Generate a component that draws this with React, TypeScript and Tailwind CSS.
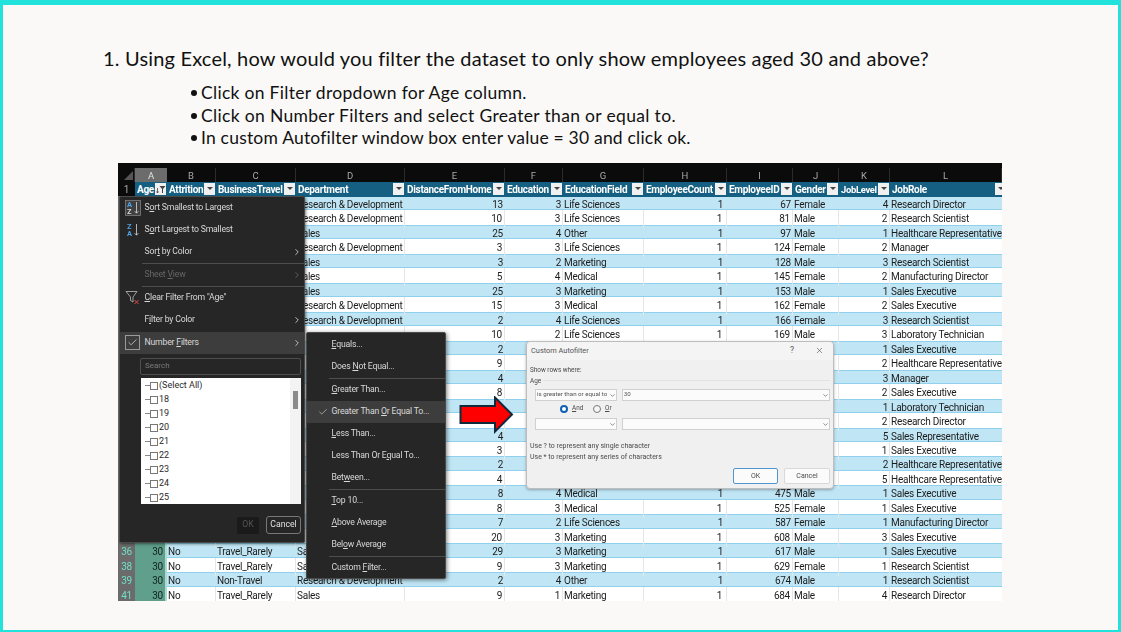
import React from "react";
import { Check, ChevronRight, ChevronDown, X } from "lucide-react";

const GRID = "grid grid-cols-[17px_32px_49px_80px_109px_100px_58px_81px_83px_66px_46px_51px_112px]";
const RD = "Research & Development";
const LS = "Life Sciences";
const SE = "Sales Executive";
const RS = "Research Scientist";
const HR = "Healthcare Representative";

type R = [string, string, string, string, string, string, string, string, string, string, string, string];
const rows: R[] = [
  ["2", "", RD, "13", "3", LS, "1", "67", "Female", "4", "Research Director", ""],
  ["3", "", RD, "10", "3", LS, "1", "81", "Male", "2", RS, ""],
  ["4", "", "Sales", "25", "4", "Other", "1", "97", "Male", "1", HR, ""],
  ["5", "", RD, "3", "3", LS, "1", "124", "Female", "2", "Manager", ""],
  ["6", "", "Sales", "3", "2", "Marketing", "1", "128", "Male", "3", RS, ""],
  ["7", "", "Sales", "5", "4", "Medical", "1", "145", "Female", "2", "Manufacturing Director", ""],
  ["8", "", "Sales", "25", "3", "Marketing", "1", "153", "Male", "1", SE, ""],
  ["9", "", RD, "15", "3", "Medical", "1", "162", "Female", "2", SE, ""],
  ["10", "", RD, "2", "4", LS, "1", "166", "Female", "3", RS, ""],
  ["11", "", "", "10", "2", LS, "1", "169", "Male", "3", "Laboratory Technician", ""],
  ["12", "", "", "2", "", "", "", "", "", "1", SE, ""],
  ["13", "", "", "9", "", "", "", "", "", "2", HR, ""],
  ["14", "", "", "4", "", "", "", "", "", "3", "Manager", ""],
  ["15", "", "", "8", "", "", "", "", "", "2", SE, ""],
  ["16", "", "", "", "", "", "", "", "", "1", "Laboratory Technician", ""],
  ["17", "", "", "", "", "", "", "", "", "2", "Research Director", ""],
  ["18", "", "", "4", "", "", "", "", "", "5", "Sales Representative", ""],
  ["19", "", "", "3", "", "", "", "", "", "1", SE, ""],
  ["20", "", "", "2", "", "", "", "", "", "2", HR, ""],
  ["21", "", "", "4", "", "", "", "", "", "5", HR, ""],
  ["22", "", "", "8", "4", "Medical", "1", "475", "Male", "1", SE, ""],
  ["23", "", "", "8", "3", "Medical", "1", "525", "Female", "1", SE, ""],
  ["24", "", "", "7", "2", LS, "1", "587", "Female", "1", "Manufacturing Director", ""],
  ["25", "", "", "20", "3", "Marketing", "1", "608", "Male", "3", SE, ""],
  ["36", "Travel_Rarely", "Sales", "29", "3", "Marketing", "1", "617", "Male", "1", SE, ""],
  ["38", "Travel_Rarely", "Sales", "9", "3", "Marketing", "1", "629", "Female", "1", RS, ""],
  ["39", "Non-Travel", RD, "2", "4", "Other", "1", "674", "Male", "1", RS, ""],
  ["41", "Travel_Rarely", "Sales", "9", "1", "Marketing", "1", "684", "Male", "4", "Research Director", ""],
];

function Num({ v, band }: { v: string; band: boolean }) {
  return <div className={`text-right pr-[2px] ${band ? "" : "border-r border-[#e6e6e6]"}`}>{v}</div>;
}
function Txt({ v, band }: { v: string; band: boolean }) {
  return <div className={`pl-[1px] whitespace-nowrap ${band ? "" : "border-r border-[#e6e6e6]"}`}>{v}</div>;
}

function DataRow({ r, i }: { r: R; i: number }) {
  const band = i % 2 === 0;
  const age = i >= 24 ? "30" : "";
  return (
    <div className={`${GRID} h-[14.48px] leading-[18px] text-[10px] tracking-[-0.25px] text-[#1c1c1c] ${band ? "bg-[#c0e6f5] shadow-[inset_0_1px_0_#8fd0ec,inset_0_-1px_0_#8fd0ec]" : "bg-white"}`}>
      <div className="bg-[#6b6b6b] text-[#6fe0c8] text-center shadow-[inset_0_-1px_0_#555]">{r[0]}</div>
      <div className="bg-[#5f9f8c] text-right pr-[2px] border-r-2 border-[#a9dccd] text-[#10241e]">{age}</div>
      <Txt v={age ? "No" : ""} band={band} />
      <Txt v={r[1]} band={band} />
      <Txt v={r[2]} band={band} />
      <Num v={r[3]} band={band} />
      <Num v={r[4]} band={band} />
      <Txt v={r[5]} band={band} />
      <div className={`text-right pr-[4px] ${band ? "" : "border-r border-[#e6e6e6]"}`}>{r[6]}</div>
      <Num v={r[7]} band={band} />
      <Txt v={r[8]} band={band} />
      <Num v={r[9]} band={band} />
      <div className="pl-[1px] whitespace-nowrap overflow-hidden">{r[10]}</div>
    </div>
  );
}

function FilterBtn({ filtered, edge }: { filtered?: boolean; edge?: boolean }) {
  return (
    <span className={`absolute top-[1px] w-[11px] h-[12px] bg-[#f0f0f0] flex items-center justify-center ${edge ? "right-[-4px]" : "right-[1px]"}`}>
      {filtered ? (
        <svg width="10" height="10" viewBox="0 0 10 10">
          <path d="M3.5 2h6L7 5v4H6V5z" fill="#444" />
          <path d="M1.5 4v5M0.5 7.5l1 1.5 1-1.5" stroke="#444" strokeWidth="0.8" fill="none" />
        </svg>
      ) : (
        <span className="w-0 h-0 border-x-[3px] border-x-transparent border-t-[3.5px] border-t-[#444]" />
      )}
    </span>
  );
}

function Head({ label }: { label: string }) {
  return (
    <div className={`relative pl-[2px] whitespace-nowrap overflow-hidden ${label === "JobLevel" ? "text-[9.4px]" : ""}`}>
      {label}
      <FilterBtn edge={label === "JobRole"} />
    </div>
  );
}

function Mn({ t }: { t: string }) {
  const parts = t.split("~");
  return (
    <>
      {parts[0]}
      {parts[1] !== undefined && <u>{parts[1][0]}</u>}
      {parts[1] !== undefined && parts[1].slice(1)}
    </>
  );
}

function MenuItem({ t, h = "h-[22px]", active, arrow, dim, icon }: { t: string; h?: string; active?: boolean; arrow?: boolean; dim?: boolean; icon?: React.ReactNode }) {
  return (
    <div className={`relative flex items-center pl-[24.5px] ${h} ${active ? "bg-[#3d3d3d]" : ""} ${dim ? "text-[#666]" : "text-[#d8d8d8]"}`}>
      {icon && <span className="absolute left-[5px] top-0 h-full flex items-center">{icon}</span>}
      <span className="whitespace-nowrap"><Mn t={t} /></span>
      {arrow && <ChevronRight className={`absolute right-[2px] w-[10px] h-[10px] ${dim ? "text-[#666]" : "text-[#d8d8d8]"}`} />}
    </div>
  );
}

function Sep() {
  return <div className="h-px ml-[22px] bg-[#4d4d4d]" />;
}

function SortIcon({ top, bottom, boxed }: { top: string; bottom: string; boxed?: boolean }) {
  return (
    <svg width="16" height="16" viewBox="0 0 16 16">
      {boxed && <rect x="0.5" y="0.5" width="15" height="15" fill="#3f3f3f" stroke="#8a8a8a" strokeWidth="0.7" />}
      <text x="2" y="7" fontSize="7.5" fontWeight="700" fontFamily="Roboto, sans-serif" fill="#4ea4e8">{top}</text>
      <text x="2" y="14" fontSize="7.5" fontWeight="700" fontFamily="Roboto, sans-serif" fill={boxed ? "#d8d8d8" : "#4ea4e8"}>{bottom}</text>
      <path d="M11.5 2v11M9.7 11.2l1.8 2 1.8-2" stroke="#d8d8d8" strokeWidth="0.8" fill="none" />
    </svg>
  );
}

function FilterMenu() {
  const list = ["(Select All)", "18", "19", "20", "21", "22", "23", "24", "25"];
  return (
    <div className="absolute left-[1px] top-[33px] w-[186px] h-[347px] bg-[#262626] border border-[#4a4a4a] rounded-[2px] shadow-[1px_1px_3px_rgba(0,0,0,0.5)] text-[8.7px] tracking-[-0.2px]">
      <MenuItem t="S~ort Smallest to Largest" icon={<SortIcon top="A" bottom="Z" boxed />} />
      <MenuItem t="S~ort Largest to Smallest" icon={<SortIcon top="Z" bottom="A" />} />
      <MenuItem t="Sor~t by Color" arrow />
      <Sep />
      <MenuItem t="Sheet ~View" dim arrow />
      <Sep />
      <MenuItem
        t={'~Clear Filter From "Age"'}
        icon={
          <svg width="15" height="15" viewBox="0 0 15 15">
            <path d="M1 1.5h11L8 7v5L5.5 10.5V7z" fill="none" stroke="#bdbdbd" strokeWidth="0.8" />
            <path d="M9.5 10l4 4M13.5 10l-4 4" stroke="#e0494b" strokeWidth="1" />
          </svg>
        }
      />
      <MenuItem t="F~ilter by Color" h="h-[23px]" arrow />
      <MenuItem
        t="Number ~Filters"
        active
        arrow
        icon={
          <span className="w-[15px] h-[15px] border border-[#9a9a9a] flex items-center justify-center">
            <Check className="w-[11px] h-[11px] text-[#e0e0e0]" strokeWidth={1.5} />
          </span>
        }
      />
      <div className="mt-[4px] ml-[20px] mr-[3px] h-[17px] border border-[#4f4f4f] rounded-[2px] flex items-center pl-[4px] text-[#7a7a7a] text-[8px] tracking-normal">Search</div>
      <div className="relative mt-[3px] ml-[21px] mr-[3px] h-[126px] bg-white overflow-hidden text-[#2a2a2a] text-[9px] tracking-normal pt-[1px]">
        {list.map((l) => (
          <div key={l} className="flex items-center h-[14px] pl-[4px]">
            <span className="w-[5px] h-px bg-[#888]" />
            <span className="w-[8px] h-[8px] border border-[#777] mr-[1px]" />
            <span className="whitespace-nowrap">{l}</span>
          </div>
        ))}
        <div className="absolute right-0 top-0 w-[11px] h-full bg-[#f3f3f3]">
          <div className="mt-[13px] mx-auto w-[5px] h-[18px] bg-[#8b8b8b]" />
        </div>
      </div>
      <div className="mt-[12px] flex justify-end gap-[7px] mr-[3px] tracking-normal">
        <div className="w-[22px] h-[17px] mt-[1px] bg-[#1a1a1a] rounded-[2px] flex items-center justify-center text-[#555]">OK</div>
        <div className="w-[35px] h-[18px] border border-[#777] rounded-[3px] flex items-center justify-center text-[#e0e0e0]">Cancel</div>
      </div>
    </div>
  );
}

function SubMenu() {
  return (
    <div className="absolute left-[188px] top-[169px] w-[140px] h-[247px] bg-[#262626] border border-[#4a4a4a] rounded-[2px] shadow-[1px_1px_4px_rgba(0,0,0,0.5)] text-[8.7px] tracking-[-0.2px] pt-[1px]">
      <MenuItem t="~Equals..." />
      <MenuItem t="Does ~Not Equal..." />
      <Sep />
      <MenuItem t="~Greater Than..." />
      <MenuItem
        t="Greater Than ~Or Equal To..."
        active
        icon={<Check className="w-[10px] h-[10px] text-[#d8d8d8] ml-[6px]" strokeWidth={1.5} />}
      />
      <MenuItem t="~Less Than..." />
      <MenuItem t="Less Than Or E~qual To..." />
      <MenuItem t="Bet~ween..." />
      <Sep />
      <MenuItem t="~Top 10..." />
      <MenuItem t="~Above Average" />
      <MenuItem t="Bel~ow Average" />
      <Sep />
      <MenuItem t="Custom ~Filter..." />
    </div>
  );
}

function Field({ w, value }: { w: string; value?: string }) {
  return (
    <div className={`relative ${w} h-[12px] bg-[#fbfbfb] border border-[#d0d0d0] flex items-center pl-[1px] text-[#555] text-[6.2px] whitespace-nowrap overflow-hidden`}>
      {value}
      <ChevronDown className="absolute right-0 top-[2px] w-[7px] h-[7px] bg-[#fbfbfb] text-[#444]" strokeWidth={2} />
    </div>
  );
}

function Dialog() {
  return (
    <div className="absolute left-[408px] top-[178px] w-[308px] h-[148px] bg-[#f0f0f0] border border-[#bdbdbd] rounded-[4px] shadow-[0_1px_3px_rgba(0,0,0,0.3)] text-[6.4px] text-[#4a4a4a]">
      <div className="h-[18px] bg-[#f4f4f4] rounded-t-[4px] flex items-center pl-[4px] pr-[9px] text-[7.4px] text-[#555]">
        <span className="flex-1">Custom Autofilter</span>
        <span className="mr-[21px] text-[8.5px]">?</span>
        <X className="w-[9px] h-[9px] text-[#333]" strokeWidth={1.4} />
      </div>
      <div className="pl-[3px] pr-[3px]">
        <div className="mt-[5px] leading-[10px]">Show rows where:</div>
        <div className="mt-[1px] flex items-center leading-[10px]">
          <span>Age</span>
          <span className="flex-1 h-px bg-[#e2e2e2] ml-[2px]" />
        </div>
        <div className="ml-[5px] mt-[3px] flex gap-[5px]">
          <Field w="w-[82px]" value="is greater than or equal to" />
          <Field w="w-[209px]" value="30" />
        </div>
        <div className="ml-[30px] mt-[1px] h-[15px] flex items-center">
          <span className="w-[8px] h-[8px] rounded-full border-[2.5px] border-[#0f5fb5] bg-white" />
          <span className="ml-[4px] w-[21px]"><Mn t="~And" /></span>
          <span className="w-[8px] h-[8px] rounded-full border border-[#777] bg-[#f6f6f6]" />
          <span className="ml-[4px]"><Mn t="~Or" /></span>
        </div>
        <div className="ml-[5px] mt-[1px] flex gap-[5px]">
          <Field w="w-[82px]" />
          <Field w="w-[209px]" />
        </div>
        <div className="mt-[11px] leading-[10px] text-[7px]">Use ? to represent any single character</div>
        <div className="mt-[1.5px] leading-[10px] text-[7px]">Use * to represent any series of characters</div>
        <div className="mt-[6px] flex justify-end gap-[6px] text-[7px]">
          <div className="w-[45px] h-[16px] bg-[#fbfbfb] border border-[#4f96cf] rounded-[2px] flex items-center justify-center">OK</div>
          <div className="w-[46px] h-[16px] bg-[#fbfbfb] border border-[#d8d8d8] rounded-[2px] flex items-center justify-center">Cancel</div>
        </div>
      </div>
    </div>
  );
}

function RedArrow() {
  return (
    <svg className="absolute left-[341px] top-[233px]" width="55" height="38" viewBox="0 0 55 38">
      <path d="M1.5 10H36V1.5L53 18.5 36 35.5V27H1.5z" fill="#fe0000" stroke="#0f2a3c" strokeWidth="2" strokeLinejoin="miter" />
    </svg>
  );
}

export default function App() {
  const letters = ["", "A", "B", "C", "D", "E", "F", "G", "H", "I", "J", "K", "L"];
  const heads = ["Attrition", "BusinessTravel", "Department", "DistanceFromHome", "Education", "EducationField", "EmployeeCount", "EmployeeID", "Gender", "JobLevel", "JobRole"];
  return (
    <div className="w-[1121px] h-[632px] bg-[#22e3dc] pt-[5px] pl-[3px] pr-[3px] pb-[2px] overflow-hidden">
      <div className="h-full bg-[#faf9f7] pt-[41px] text-[#111] font-['Lato',sans-serif]">
        <div className="pl-[100px] text-[20px] leading-[24px] tracking-[0.18px]">1. Using Excel, how would you filter the dataset to only show employees aged 30 and above?</div>
        <ul className="mt-[12px] ml-[188px] text-[17.5px] leading-[22.5px]">
          {[
            { t: "Click on Filter dropdown for Age column.", c: "tracking-[0.3px]" },
            { t: "Click on Number Filters and select Greater than or equal to.", c: "tracking-[0.33px]" },
            { t: "In custom Autofilter window box enter value = 30 and click ok.", c: "tracking-[0.2px]" },
          ].map(({ t, c }) => (
            <li key={t} className={`flex items-center ${c}`}>
              <span className="w-[6px] h-[6px] rounded-full bg-[#111] mr-[4px]" />
              {t}
            </li>
          ))}
        </ul>
        <div className="relative mt-[13px] ml-[115px] w-[884px] h-[438px] overflow-hidden font-['Roboto',sans-serif] blur-[0.35px]">
          <div className={`${GRID} h-[19px] bg-[#0b0b0b] pt-[5px] text-[9.5px] text-[#a8a8a8]`}>
            {letters.map((l, i) => (
              <div key={l + i} className={`relative h-[14px] leading-[15px] text-center ${i === 1 ? "bg-[#6c6c6c] text-[#e0e0e0]" : "border-r border-[#2b2b2b]"}`}>
                {i === 0 ? <span className="absolute right-[1px] bottom-[2px] w-0 h-0 border-l-[9px] border-l-transparent border-b-[9px] border-b-[#555]" /> : l}
              </div>
            ))}
          </div>
          <div className={`${GRID} h-[14.5px] leading-[15px] text-[10px] font-bold tracking-[-0.3px] text-white`}>
            <div className="bg-[#0b0b0b] text-[#a8a8a8] font-normal text-center">1</div>
            <div className="relative bg-[#156082] pl-[2px]">Age<FilterBtn filtered /></div>
            {heads.map((h) => (
              <div key={h} className="bg-[#156082] min-w-0 grid">
                <Head label={h} />
              </div>
            ))}
          </div>
          {rows.map((r, i) => (
            <DataRow key={i} r={r} i={i} />
          ))}
          <FilterMenu />
          <SubMenu />
          <Dialog />
          <RedArrow />
        </div>
      </div>
    </div>
  );
}
